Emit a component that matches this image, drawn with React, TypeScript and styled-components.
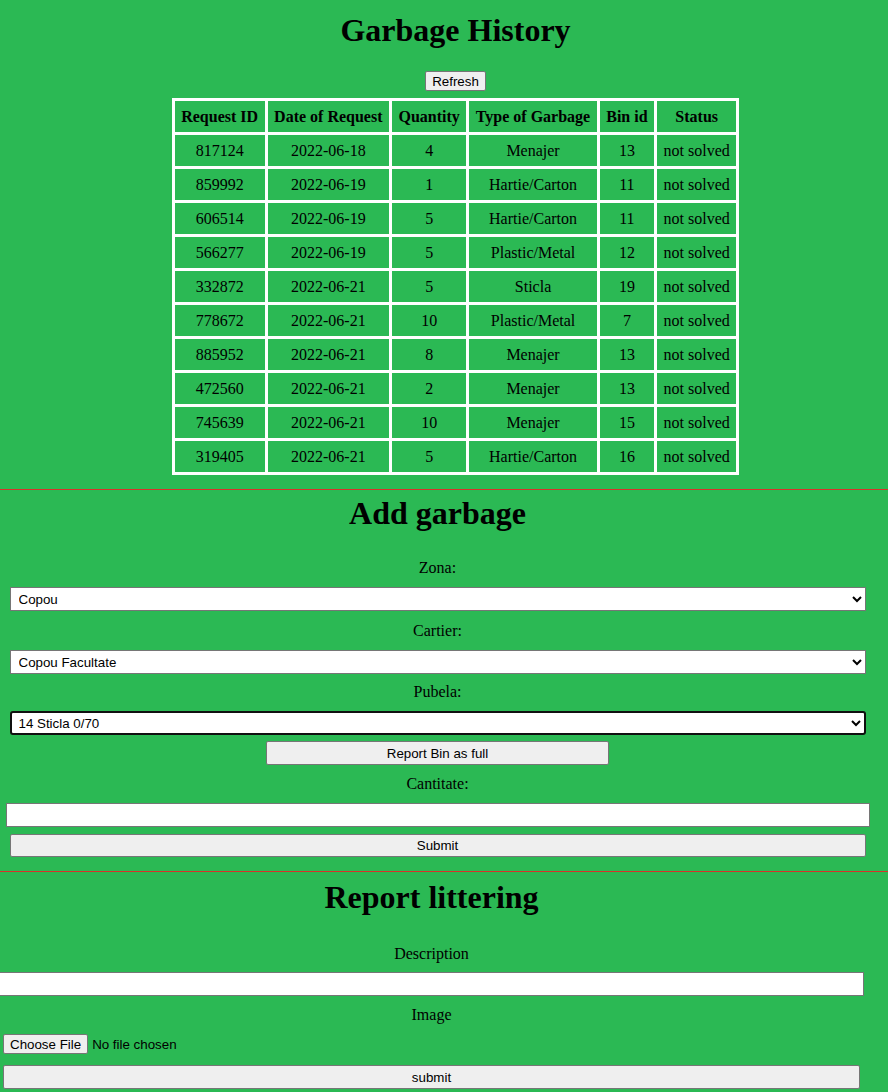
import React from "react";
import styled, { createGlobalStyle } from "styled-components";

const GlobalStyle = createGlobalStyle`
  html, body {
    margin: 0;
    padding: 0;
    background: #2bb954;
  }
  body {
    font-family: "Liberation Serif", "Times New Roman", serif;
    font-size: 16px;
    color: #000;
    overflow-x: hidden;
  }
`;

const Page = styled.div`
  display: flex;
  flex-direction: column;
  padding-top: 12px;
  width: 888px;
`;

const Section = styled.section<{ $offset: number; $width: number }>`
  display: flex;
  flex-direction: column;
  align-items: center;
  margin-left: ${(p) => p.$offset}px;
  width: ${(p) => p.$width}px;
`;

const Title = styled.h1<{ $top?: number }>`
  margin: ${(p) => p.$top ?? 0}px 0 0;
  font-size: 32px;
  line-height: 37px;
  font-weight: bold;
  text-align: center;
`;

const Divider = styled.div<{ $top: number }>`
  height: 1px;
  background: #d9322a;
  margin-top: ${(p) => p.$top}px;
  width: 888px;
`;

const NativeButton = styled.button<{ $width?: number; $height?: number; $top: number }>`
  font-family: "Liberation Sans", Arial, sans-serif;
  font-size: 13.33px;
  color: #000;
  background: #efefef;
  border: 1px solid #767676;
  border-radius: 2px;
  padding: 0 6px;
  height: ${(p) => p.$height ?? 24}px;
  ${(p) => (p.$width ? `width: ${p.$width}px;` : "")}
  margin-top: ${(p) => p.$top}px;
  box-sizing: border-box;
  cursor: pointer;
`;

const Table = styled.table`
  margin-top: 7px;
  background: #ffffff;
  border-spacing: 3px;
  font-size: 16px;
`;

const HeadCell = styled.th`
  background: #2bb954;
  padding: 6px 6.5px;
  line-height: 19px;
  font-weight: bold;
  text-align: center;
  white-space: nowrap;
`;

const Cell = styled.td`
  background: #2bb954;
  padding: 6px 6.5px;
  line-height: 19px;
  text-align: center;
  white-space: nowrap;
`;

const Label = styled.label<{ $top: number }>`
  display: block;
  margin-top: ${(p) => p.$top}px;
  line-height: 18px;
  font-size: 16px;
  text-align: center;
`;

const Select = styled.select<{ $focused?: boolean }>`
  margin-top: 10px;
  width: 856px;
  height: 24px;
  box-sizing: border-box;
  font-family: "Liberation Sans", Arial, sans-serif;
  font-size: 13.33px;
  color: #000;
  background: #fff;
  border: 1px solid #767676;
  border-radius: ${(p) => (p.$focused ? 3 : 0)}px;
  padding: 0 4px;
  ${(p) =>
    p.$focused
      ? `border: 2px solid #101010; box-shadow: inset 0 0 0 1px #fff; padding: 0 3px;`
      : ""}
`;

const TextInput = styled.input<{ $width: number; $top: number; $shift?: number }>`
  margin-top: ${(p) => p.$top}px;
  margin-left: ${(p) => p.$shift ?? 0}px;
  width: ${(p) => p.$width}px;
  height: 24px;
  box-sizing: border-box;
  border: 1px solid #767676;
  background: #fff;
  padding: 1px 2px;
  font-family: "Liberation Sans", Arial, sans-serif;
  font-size: 13.33px;
  flex-shrink: 0;
`;

const FileRow = styled.div`
  align-self: flex-start;
  margin-top: 10px;
  margin-left: 3px;
  display: flex;
  align-items: center;
  gap: 4px;
  font-family: "Liberation Sans", Arial, sans-serif;
  font-size: 13.33px;
`;

const FileButton = styled.label`
  display: inline-flex;
  align-items: center;
  height: 20px;
  box-sizing: border-box;
  padding: 0 6px;
  background: #efefef;
  border: 1px solid #767676;
  border-radius: 2px;
  cursor: pointer;
`;

const HiddenFile = styled.input`
  display: none;
`;

const rows = [
  ["817124", "2022-06-18", "4", "Menajer", "13", "not solved"],
  ["859992", "2022-06-19", "1", "Hartie/Carton", "11", "not solved"],
  ["606514", "2022-06-19", "5", "Hartie/Carton", "11", "not solved"],
  ["566277", "2022-06-19", "5", "Plastic/Metal", "12", "not solved"],
  ["332872", "2022-06-21", "5", "Sticla", "19", "not solved"],
  ["778672", "2022-06-21", "10", "Plastic/Metal", "7", "not solved"],
  ["885952", "2022-06-21", "8", "Menajer", "13", "not solved"],
  ["472560", "2022-06-21", "2", "Menajer", "13", "not solved"],
  ["745639", "2022-06-21", "10", "Menajer", "15", "not solved"],
  ["319405", "2022-06-21", "5", "Hartie/Carton", "16", "not solved"],
];

const headers = ["Request ID", "Date of Request", "Quantity", "Type of Garbage", "Bin id", "Status"];

export default function App() {
  return (
    <>
      <GlobalStyle />
      <Page>
        <Section $offset={23} $width={865}>
          <Title>Garbage History</Title>
          <NativeButton $top={22} $height={20}>Refresh</NativeButton>
          <Table>
            <thead>
              <tr>
                {headers.map((h) => (
                  <HeadCell key={h}>{h}</HeadCell>
                ))}
              </tr>
            </thead>
            <tbody>
              {rows.map((r) => (
                <tr key={r[0]}>
                  {r.map((c, i) => (
                    <Cell key={i}>{c}</Cell>
                  ))}
                </tr>
              ))}
            </tbody>
          </Table>
        </Section>

        <Divider $top={14} />

        <Section $offset={0} $width={875}>
          <Title $top={5}>Add garbage</Title>
          <Label $top={27}>Zona:</Label>
          <Select defaultValue="copou">
            <option value="copou">Copou</option>
          </Select>
          <Label $top={11}>Cartier:</Label>
          <Select defaultValue="fac">
            <option value="fac">Copou Facultate</option>
          </Select>
          <Label $top={9}>Pubela:</Label>
          <Select $focused defaultValue="14">
            <option value="14">14 Sticla 0/70</option>
          </Select>
          <NativeButton $top={6} $width={343}>Report Bin as full</NativeButton>
          <Label $top={10}>Cantitate:</Label>
          <TextInput $top={10} $width={864} type="text" />
          <NativeButton $top={7} $width={856} $height={23}>Submit</NativeButton>
        </Section>

        <Divider $top={14} />

        <Section $offset={0} $width={863}>
          <Title $top={7}>Report littering</Title>
          <Label $top={29}>Description</Label>
          <TextInput $top={9} $width={868} $shift={-3} type="text" />
          <Label $top={10}>Image</Label>
          <FileRow>
            <FileButton>
              Choose File
              <HiddenFile type="file" />
            </FileButton>
            <span>No file chosen</span>
          </FileRow>
          <NativeButton $top={11} $width={857}>submit</NativeButton>
        </Section>
      </Page>
    </>
  );
}
